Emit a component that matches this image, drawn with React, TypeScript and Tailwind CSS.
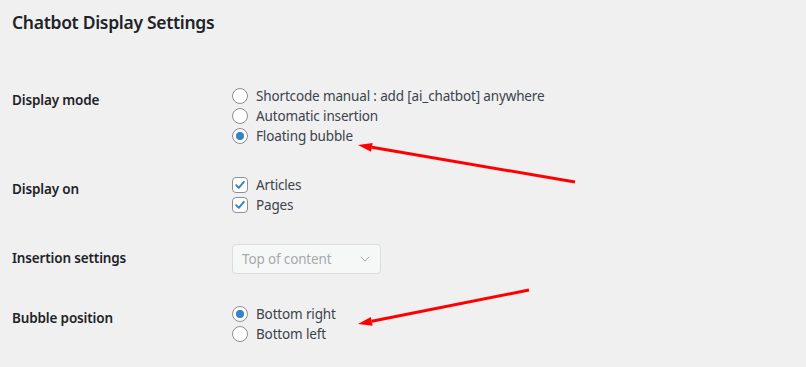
import { ChevronDown } from 'lucide-react';

const Radio = ({ checked, label }: { checked?: boolean; label: string }) => (
    <div className='flex items-center h-5'>
        <span className='w-4 h-4 rounded-full border border-[#8c8f94] bg-white flex items-center justify-center shrink-0'>
            {checked && <span className='w-2 h-2 rounded-full bg-[#3582c4]' />}
        </span>
        <span className='ml-2 text-[#3c434a]'>{label}</span>
    </div>
);

const Checkbox = ({ label }: { label: string }) => (
    <div className='flex items-center h-5'>
        <span className='w-4 h-4 rounded-[4px] border border-[#8c8f94] bg-white flex items-center justify-center shrink-0'>
            <svg viewBox="0 0 16 16" className='w-4 h-4'>
                <path d="M3.6 8.2 L6.6 11.2 L12.4 4.4" fill="none" stroke="#3582c4" strokeWidth="2.2" strokeLinecap="round" strokeLinejoin="round" />
            </svg>
        </span>
        <span className='ml-2 text-[#3c434a]'>{label}</span>
    </div>
);

const Row = ({ label, className, children }: { label: string; className: string; children: React.ReactNode }) => (
    <div className={`flex ${className}`}>
        <div className='w-[220px] shrink-0 pt-1 font-semibold text-[#1d2327] leading-5'>{label}</div>
        <div className='flex flex-col'>{children}</div>
    </div>
);

export default function App() {
    return (
        <div
            className='relative w-[806px] h-[367px] bg-[#f0f0f1] px-3 text-[13.5px] tracking-[-0.15px] leading-5 overflow-hidden'
            style={{ fontFamily: '"Noto Sans", "Open Sans", sans-serif' }}
        >
            <h2 className='pt-[10px] text-[17.5px] tracking-[-0.3px] leading-6 font-semibold text-[#1d2327]'>Chatbot Display Settings</h2>

            <div className='mt-[52px]'>
                <Row label="Display mode" className='items-start'>
                    <Radio label="Shortcode manual : add [ai_chatbot] anywhere" />
                    <Radio label="Automatic insertion" />
                    <Radio checked label="Floating bubble" />
                </Row>

                <Row label="Display on" className='mt-[29px]'>
                    <Checkbox label="Articles" />
                    <Checkbox label="Pages" />
                </Row>

                <Row label="Insertion settings" className='mt-[29px]'>
                    <div className='w-[149px] h-[30px] rounded-[4px] border border-[#dcdcde] bg-[#f6f7f7] flex items-center justify-between pl-[9px] pr-[7px] text-[#a7aaad]'>
                        <span>Top of content</span>
                        <ChevronDown className='w-4 h-4' strokeWidth={1.5} />
                    </div>
                </Row>

                <Row label="Bubble position" className='mt-[30px]'>
                    <Radio checked label="Bottom right" />
                    <Radio label="Bottom left" />
                </Row>
            </div>

            <svg className='absolute inset-0 pointer-events-none' width="806" height="367" viewBox="0 0 806 367">
                <line x1="575" y1="182" x2="371.8" y2="147.35" stroke="#ff0000" strokeWidth="3" />
                <polygon points="358,145 372.6,142.9 371.0,151.8" fill="#ff0000" />
                <line x1="529" y1="290" x2="371.7" y2="321.3" stroke="#ff0000" strokeWidth="3" />
                <polygon points="358,324 372.6,325.7 370.8,316.9" fill="#ff0000" />
            </svg>
        </div>
    );
}
